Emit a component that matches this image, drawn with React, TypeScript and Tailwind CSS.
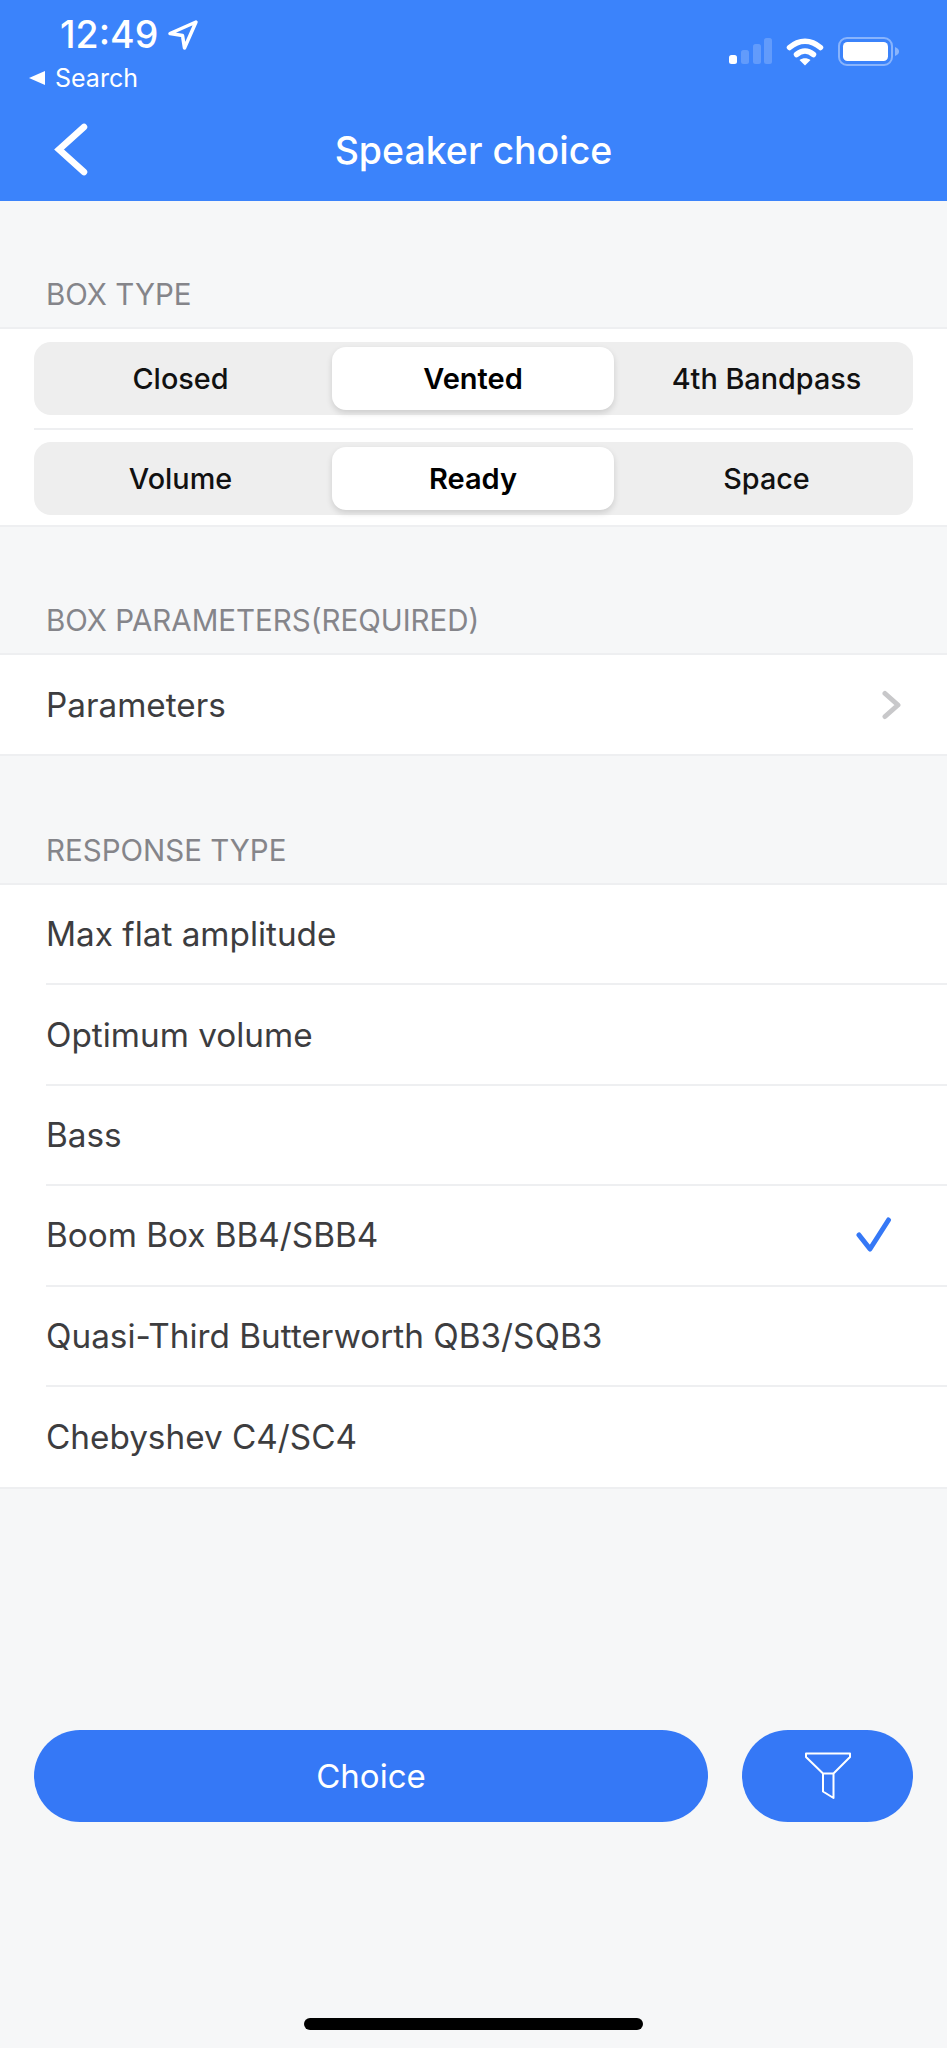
const F = "font-['Inter','Liberation_Sans',sans-serif]";

function StatusIcons() {
  return (
    <svg width="172" height="32" viewBox="729 36 172 32" fill="none">
      <rect x="729" y="55" width="8" height="9" rx="2.5" fill="#fff" />
      <rect x="741" y="50" width="8" height="14" rx="2.5" fill="#fff" fillOpacity="0.2" />
      <rect x="753" y="44" width="8" height="20" rx="2.5" fill="#fff" fillOpacity="0.2" />
      <rect x="764" y="38" width="8" height="26" rx="2.5" fill="#fff" fillOpacity="0.2" />
      <path d="M789.5 47.500C799 39 811 39 820.500 47.500" stroke="#fff" strokeWidth="5.500" strokeLinecap="round" />
      <path d="M796.500 54.500C802 50 808 50 813.500 54.500" stroke="#fff" strokeWidth="5.500" strokeLinecap="round" />
      <path d="M799.500 60L805 65.500L810.500 60C807 57.500 803 57.500 799.500 60Z" fill="#fff" />
      <rect x="839" y="38" width="53" height="27" rx="8" stroke="#fff" strokeOpacity="0.4" strokeWidth="2" />
      <rect x="843" y="42" width="45" height="19" rx="4.5" fill="#fff" />
      <path d="M895 47C898 48 899 50 899 51.500C899 53 898 55 895 56Z" fill="#fff" fillOpacity="0.4" />
    </svg>
  );
}

function Segmented({ items }: { items: string[] }) {
  return (
    <div className="grid h-[73px] grid-cols-3 rounded-[17px] bg-[#eeeeee]">
      {items.map((t, i) => (
        <div
          key={t}
          className={
            i === 1
              ? "my-[5px] ml-[5px] mr-[6px] flex items-center justify-center rounded-[14px] bg-white text-[29px] font-semibold text-black shadow-[0_3px_6px_rgba(0,0,0,0.14)]"
              : "flex items-center justify-center text-[28.800px] font-[450] text-[#111]"
          }
        >
          {t}
        </div>
      ))}
    </div>
  );
}

function Label({ text, h }: { text: string; h: string }) {
  return (
    <div className={`${h} flex items-end pb-[11px] pl-[46px] text-[29.500px] text-[#85858a]`}>{text}</div>
  );
}

const rows = [
  "Max flat amplitude",
  "Optimum volume",
  "Bass",
  "Boom Box BB4/SBB4",
  "Quasi-Third Butterworth QB3/SQB3",
  "Chebyshev C4/SC4",
];

export default function App() {
  return (
    <div className={`${F} flex min-h-[2048px] flex-col bg-[#f6f7f8]`}>
      <header className="flex h-[201px] flex-col bg-[#3b83fb] text-white">
        <div className="flex h-[93px] items-start justify-between pr-[46px]">
          <div className="flex flex-col pl-[29px]">
            <div className="mt-[15px] flex h-[40px] items-center pl-[31px]">
              <span className="text-[37.500px] leading-none font-medium">12:49</span>
              <svg className="ml-[9px]" width="32" height="32" viewBox="0 0 32 32" fill="none">
                <path
                  d="M29 3L3 14.500L15.500 16.500L17.500 29Z"
                  stroke="#fff"
                  strokeWidth="3.500"
                  strokeLinejoin="round"
                />
              </svg>
            </div>
            <div className="mt-[4px] flex h-[38px] items-center">
              <svg width="16" height="14" viewBox="0 0 16 14">
                <path d="M16 0V14L0 7Z" fill="#fff" />
              </svg>
              <span className="ml-[10px] text-[25px] leading-none">Search</span>
            </div>
          </div>
          <div className="mt-[36px]">
            <StatusIcons />
          </div>
        </div>
        <div className="relative flex h-[108px] items-center justify-center pt-[8px]">
          <svg className="absolute left-[54px] top-[29px]" width="36" height="54" viewBox="0 0 36 54" fill="none">
            <path d="M30 5L5 27.500L30 50" stroke="#fff" strokeWidth="6.500" strokeLinecap="round" />
          </svg>
          <span className="text-[37.500px] font-medium">Speaker choice</span>
        </div>
      </header>

      <Label text="BOX TYPE" h="h-[126px]" />
      <section className="flex h-[200px] flex-col border-y-2 border-[#eeeff1] bg-white px-[34px] pt-[13px]">
        <Segmented items={["Closed", "Vented", "4th Bandpass"]} />
        <div className="mb-[12px] mt-[13px] h-[2px] bg-[#eeeff1]" />
        <Segmented items={["Volume", "Ready", "Space"]} />
      </section>

      <Label text="BOX PARAMETERS(REQUIRED)" h="h-[126px]" />
      <section className="flex h-[103px] items-center justify-between border-y-2 border-[#eeeff1] bg-white pl-[46px] pr-[45px] text-[33.300px] text-[#3d3d3f]">
        <span className="pt-[2px]">Parameters</span>
        <svg width="20" height="30" viewBox="0 0 20 30" fill="none">
          <path d="M3 3.500L16 15L3 26.500" stroke="#c8c8ca" strokeWidth="5" strokeLinecap="round" strokeLinejoin="round" />
        </svg>
      </section>

      <Label text="RESPONSE TYPE" h="h-[127px]" />
      <section className="border-y-2 border-[#eeeff1] bg-white pl-[46px] text-[33.300px] text-[#3d3d3f]">
        {rows.map((r, i) => (
          <div
            key={r}
            className={`flex h-[100.400px] items-center justify-between pr-[55px] ${i < rows.length - 1 ? "border-b-2 border-[#eeeff1]" : ""}`}
          >
            <span className="pt-[2px]">{r}</span>
            {i === 3 && (
              <svg width="36" height="36" viewBox="0 0 36 36" fill="none">
                <path d="M3 18L14 32L32.500 3" stroke="#3578f6" strokeWidth="5" strokeLinecap="round" strokeLinejoin="round" />
              </svg>
            )}
          </div>
        ))}
      </section>

      <div className="mt-[241px] flex h-[92px] gap-[34px] px-[34px]">
        <button className="flex-1 rounded-full bg-[#3578f6] text-[33px] text-white">Choice</button>
        <button className="flex w-[171px] items-center justify-center rounded-full bg-[#3578f6]">
          <svg width="46" height="48" viewBox="0 0 46 48" fill="none">
            <path
              d="M1 1.500H45V5L28.500 21.500V46L18 39.500V21.500L1 5ZM18 21.500H28.500"
              stroke="#fff"
              strokeWidth="2"
              strokeLinejoin="round"
            />
          </svg>
        </button>
      </div>

      <div className="mx-auto mt-[196px] h-[12px] w-[339px] rounded-full bg-black" />
    </div>
  );
}
